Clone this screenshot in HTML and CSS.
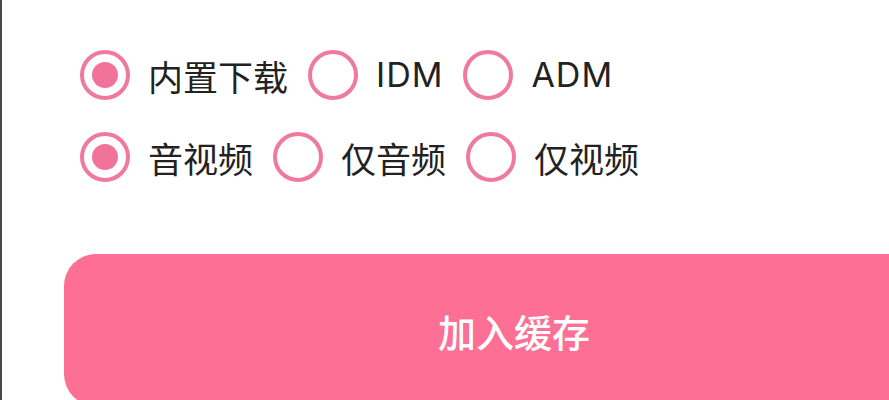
FILE: index.html
```html
<!DOCTYPE html>
<html lang="zh-CN">
<head>
<meta charset="utf-8">
<link rel="stylesheet" href="styles.css">
</head>
<body>
<div class="page">
  <div class="options">
    <div class="row">
      <label class="opt"><span class="radio checked"></span><span class="label">内置下载</span></label>
      <label class="opt"><span class="radio"></span><span class="label latin">IDM</span></label>
      <label class="opt"><span class="radio"></span><span class="label latin">ADM</span></label>
    </div>
    <div class="row">
      <label class="opt"><span class="radio checked"></span><span class="label">音视频</span></label>
      <label class="opt"><span class="radio"></span><span class="label">仅音频</span></label>
      <label class="opt"><span class="radio"></span><span class="label">仅视频</span></label>
    </div>
  </div>
  <div class="btn">加入缓存</div>
</div>
</body>
</html>
```
FILE: styles.css
```css
html, body {
  margin: 0;
  padding: 0;
  background: #ffffff;
}
body {
  width: 889px;
  height: 400px;
  overflow: hidden;
  box-sizing: border-box;
  border-left: 2px solid #4a4a4a;
  font-family: "Noto Sans CJK SC", sans-serif;
}
.page {
  padding: 50px 0 0 78px;
}
.options {
  display: flex;
  flex-direction: column;
  gap: 32px;
}
.row {
  display: flex;
  align-items: center;
  gap: 20px;
  height: 50px;
}
.opt {
  display: flex;
  align-items: center;
  gap: 18px;
}
.radio {
  width: 50px;
  height: 50px;
  box-sizing: border-box;
  border: 4px solid #f07a9c;
  border-radius: 50%;
  display: flex;
  align-items: center;
  justify-content: center;
}
.radio.checked::after {
  content: "";
  width: 26px;
  height: 26px;
  border-radius: 50%;
  background: #f2739a;
}
.label {
  font-size: 35px;
  color: #222;
  line-height: 1;
  font-weight: 400;
}
.label.latin {
  font-family: "Inter", "Noto Sans CJK SC", sans-serif;
  font-size: 34px;
  letter-spacing: 1px;
  font-weight: 400;
}
.btn {
  margin: 72px 0 0 -16px;
  width: 900px;
  height: 152px;
  border-radius: 32px;
  background: #fd6f94;
  color: #ffffff;
  font-size: 38px;
  font-weight: 500;
  display: flex;
  align-items: center;
  justify-content: center;
}
```
